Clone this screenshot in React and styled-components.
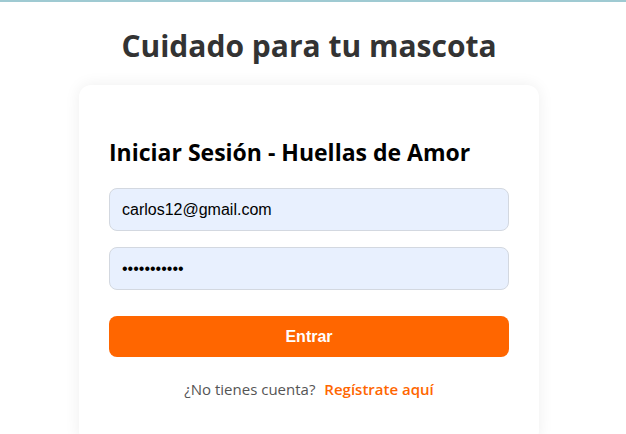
import React from 'react'
import styled, { createGlobalStyle } from 'styled-components'

const GlobalStyle = createGlobalStyle`
    body {
        margin: 0;
        background: #ffffff;
        font-family: 'Open Sans', 'Noto Sans', sans-serif;
    }
`

const Page = styled.div`
    border-top: 2px solid #9fcad2;
    min-height: 432px;
    padding-right: 8px;
    display: flex;
    flex-direction: column;
    align-items: center;
`

const Title = styled.h1`
    margin: 24px 0 19px 0;
    font-size: 30px;
    line-height: 40px;
    font-weight: 700;
    color: #333333;
`

const Card = styled.div`
    width: 400px;
    padding: 51px 30px 44px 30px;
    background: #ffffff;
    border-radius: 12px;
    box-shadow: 0 0 16px rgba(0, 0, 0, 0.07);
    display: flex;
    flex-direction: column;
`

const CardTitle = styled.h2`
    margin: 0 0 20px 0;
    font-size: 23px;
    line-height: 32px;
    font-weight: 700;
    color: #000000;
`

const Form = styled.form`
    display: flex;
    flex-direction: column;
    gap: 16px;
`

const Input = styled.input`
    box-sizing: border-box;
    height: 43px;
    padding: 0 12px;
    border: 1px solid #d3d8e0;
    border-radius: 8px;
    background: #e8f0fe;
    font-family: 'Liberation Sans', Arial, sans-serif;
    font-size: 16px;
    color: #000000;
    outline: none;
`

const Button = styled.button`
    margin-top: 10px;
    height: 41px;
    border: none;
    border-radius: 8px;
    background: #ff6600;
    color: #ffffff;
    font-family: 'Liberation Sans', Arial, sans-serif;
    font-size: 16px;
    font-weight: 700;
    cursor: pointer;
`

const Footer = styled.p`
    margin: 22px 0 0 0;
    text-align: center;
    font-size: 15px;
    line-height: 20px;
    color: #555555;
`

const RegisterLink = styled.a`
    margin-left: 9px;
    color: #ff6600;
    font-weight: 600;
    text-decoration: none;
`

const App = () => {
    return (
        <Page>
            <GlobalStyle />
            <Title>Cuidado para tu mascota</Title>
            <Card>
                <CardTitle>Iniciar Sesión - Huellas de Amor</CardTitle>
                <Form onSubmit={(e) => e.preventDefault()}>
                    <Input type="email" defaultValue="carlos12@gmail.com" />
                    <Input type="password" defaultValue="carlos12345" />
                    <Button type="submit">Entrar</Button>
                </Form>
                <Footer>
                    ¿No tienes cuenta?
                    <RegisterLink href="#">Regístrate aquí</RegisterLink>
                </Footer>
            </Card>
        </Page>
    )
}

export default App
